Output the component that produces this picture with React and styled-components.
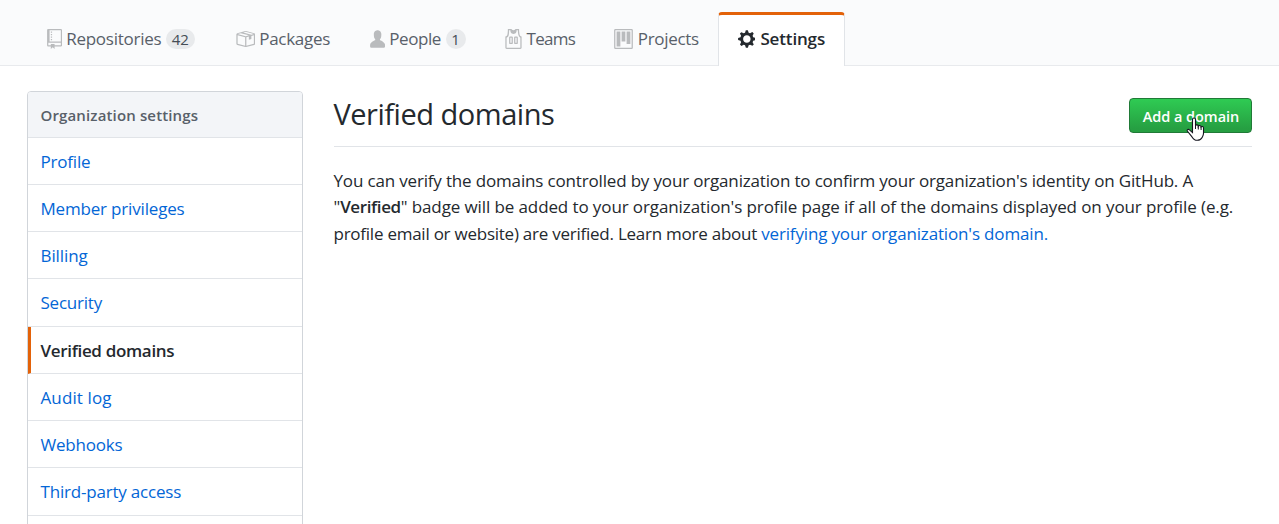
import React from "react";
import styled, { createGlobalStyle } from "styled-components";

const GlobalStyle = createGlobalStyle`
  * { box-sizing: border-box; }
  body {
    margin: 0;
    background: #fff;
    color: #24292e;
    font: 17px/26.5px "Open Sans", "Noto Sans", sans-serif;
    overflow: hidden;
  }
`;

const Page = styled.div`
  height: 524px;
  overflow: hidden;
`;

const TabBar = styled.nav`
  display: flex;
  align-items: flex-end;
  height: 66px;
  padding-left: 28px;
  background: #fafbfc;
  border-bottom: 1px solid #e8eaed;
`;

const Tab = styled.a`
  display: flex;
  align-items: flex-start;
  flex: none;
  width: ${(p) => p.$width}px;
  height: 54px;
  margin-bottom: -1px;
  padding: 11px 0 0 ${(p) => (p.$active ? 18.7 : 18)}px;
  border: 1px solid ${(p) => (p.$active ? "#e1e4e8" : "transparent")};
  border-top: 3px solid ${(p) => (p.$active ? "#e36209" : "transparent")};
  border-bottom: 0;
  border-radius: 4px 4px 0 0;
  background: ${(p) => (p.$active ? "#fff" : "transparent")};
  color: ${(p) => (p.$active ? "#24292e" : "#586069")};
  font-weight: ${(p) => (p.$active ? 600 : 400)};
  white-space: nowrap;
`;

const Label = styled.span`
  letter-spacing: ${(p) => p.$track || 0}px;
  white-space: nowrap;
`;

const TabIcon = styled.svg`
  flex: none;
  height: 20px;
  margin: 3px ${(p) => p.$gap}px 0 0;
  fill: ${(p) => (p.$active ? "#24292e" : "#b9bbbd")};
`;

const Counter = styled.span`
  height: 20px;
  margin: 3px 0 0 4.5px;
  padding: 0 5.8px;
  border-radius: 10px;
  background: #e8eaec;
  color: #444d56;
  font-size: 15px;
  line-height: 20px;
`;

const Content = styled.div`
  display: flex;
  align-items: flex-start;
  gap: 30.5px;
  padding: 25px 27px 0;
`;

const Menu = styled.aside`
  flex: none;
  width: 276px;
  border: 1px solid #d1d5da;
  border-radius: 4px;
  overflow: hidden;
`;

const MenuHeading = styled.h2`
  height: 45.65px;
  margin: 0;
  padding: 0 12.5px;
  border-bottom: 1px solid #e1e4e8;
  background: #f3f5f8;
  color: #586069;
  font-size: 15px;
  font-weight: 600;
  line-height: 47px;
`;

const MenuItem = styled.a`
  display: block;
  height: 47.25px;
  padding-left: ${(p) => (p.$active ? 9.5 : 12.5)}px;
  border-bottom: 1px solid #e1e4e8;
  border-left: ${(p) => (p.$active ? "3px solid #e36209" : "0")};
  color: ${(p) => (p.$active ? "#24292e" : "#0366d6")};
  font-weight: ${(p) => (p.$active ? 600 : 400)};
  line-height: 47.7px;
`;

const Main = styled.main`
  width: 918.5px;
`;

const Subhead = styled.header`
  display: flex;
  align-items: flex-start;
  justify-content: space-between;
  height: 56px;
  border-bottom: 1px solid #e1e4e8;
`;

const Title = styled.h1`
  margin: 0;
  font-size: 29px;
  font-weight: 400;
  line-height: 46px;
`;

const AddButton = styled.button`
  position: relative;
  width: 123px;
  height: 35px;
  margin-top: 7px;
  padding: 2px 0 0 1px;
  border: 1px solid #207a37;
  border-radius: 4px;
  background: linear-gradient(#2fcb53, #269f42 90%);
  color: #fff;
  font: 600 14.5px/31px "Open Sans", "Noto Sans", sans-serif;
  white-space: nowrap;
`;

const Pointer = styled.svg`
  position: absolute;
  left: 56px;
  top: 18px;
`;

const Description = styled.p`
  margin: 20.6px 0 0;
`;

const Line = styled.span`
  display: block;
  letter-spacing: ${(p) => p.$track || 0}px;
  white-space: nowrap;
`;

const Strong = styled.b`
  font-weight: 600;
  letter-spacing: -0.4px;
`;

const Link = styled.a`
  color: #0366d6;
  letter-spacing: -0.16px;
`;

const icons = {
  repo: [12, "M4 9H3V8h1v1zm0-3H3v1h1V6zm0-2H3v1h1V4zm0-2H3v1h1V2zm8-1v12c0 .55-.45 1-1 1H6v2l-1.5-1.5L3 16v-2H1c-.55 0-1-.45-1-1V1c0-.55.45-1 1-1h10c.55 0 1 .45 1 1zm-1 10H1v2h2v-1h3v1h5v-2zm0-10H2v9h9V1z"],
  package: [16, "M1 4.27v7.47c0 .45.3.84.75.97l6.5 1.73c.16.05.34.05.5 0l6.5-1.73c.45-.13.75-.52.75-.97V4.27c0-.45-.3-.84-.75-.97l-6.5-1.74a1.4 1.4 0 0 0-.5 0L1.75 3.3c-.45.13-.75.52-.75.97zm7 9.09l-6-1.59V5l6 1.61v6.75zM2 4l2.5-.67L11 5.06l-2.5.67L2 4zm13 7.77l-6 1.59V6.61l2-.55V8.5l2-.53V5.53L15 5v6.77zm-2-7.24L6.5 2.8l2-.53L15 4l-2 .53z"],
  person: [12, "M12 14.002a.998.998 0 0 1-.998.998H1.001A1 1 0 0 1 0 13.999V13c0-2.633 4-4 4-4s.229-.409 0-1c-.841-.62-.944-1.59-1-4 .173-2.413 1.867-3 3-3s2.827.586 3 3c-.056 2.41-.159 3.38-1 4-.229.59 0 1 0 1s4 1.367 4 4v1.002z"],
  jersey: [14, "M4.5 6l-.5.5v5l.5.5h2l.5-.5v-5L6.5 6h-2zM6 11H5V7h1v4zm6.27-7.25C12.05 2.37 11.96 1.12 12 0H9.02c0 .27-.13.48-.39.69-.25.2-.63.3-1.13.3-.5 0-.88-.09-1.13-.3-.23-.2-.36-.42-.37-.69H3c.05 1.13-.03 2.38-.25 3.75C2.55 5.13 1.95 5.88 1 6v9c.02.27.11.48.31.69.2.21.42.3.69.31h11c.27-.02.48-.11.69-.31.21-.2.3-.42.31-.69V6c-.95-.13-1.53-.88-1.75-2.25h.02zM13 15H2V7c.89-.5 1.48-1.25 1.72-2.25S4.03 2.5 4 1h1c-.02.78.16 1.47.52 2.06.36.58 1.02.89 2 .94.98-.02 1.64-.33 2-.94.36-.59.5-1.28.48-2.06h1c.02 1.42.13 2.55.33 3.38.2.81.69 2 1.67 2.62v8zM8.5 6l-.5.5v5l.5.5h2l.5-.5v-5l-.5-.5h-2zm1.5 5H9V7h1v4z"],
  project: [15, "M10 12h3V2h-3v10zm-4-2h3V2H6v8zm-4 4h3V2H2v12zm-1 1h13V1H1v14zM14 0H1a1 1 0 0 0-1 1v14a1 1 0 0 0 1 1h13a1 1 0 0 0 1-1V1a1 1 0 0 0-1-1z"],
  gear: [14, "M14 8.77v-1.6l-1.94-.64-.45-1.09.88-1.84-1.13-1.13-1.81.91-1.09-.45-.69-1.92h-1.6l-.63 1.94-1.11.45-1.84-.88-1.13 1.13.91 1.81-.45 1.09L0 7.23v1.59l1.94.64.45 1.09-.88 1.84 1.13 1.13 1.81-.91 1.09.45.69 1.92h1.59l.63-1.94 1.11-.45 1.84.88 1.13-1.13-.92-1.81.47-1.09L14 8.75v.02zM7 11c-1.66 0-3-1.34-3-3s1.34-3 3-3 3 1.34 3 3-1.34 3-3 3z"],
};

const tabs = [
  { label: "Repositories", icon: "repo", width: 188, count: 42, track: -0.25, gap: 4 },
  { label: "Packages", icon: "package", width: 135, track: -0.28, gap: 4 },
  { label: "People", icon: "person", width: 134, count: 1, track: -0.4, gap: 4 },
  { label: "Teams", icon: "jersey", width: 110, track: -0.7, gap: 4.8 },
  { label: "Projects", icon: "project", width: 123, track: -0.3, gap: 4.8 },
  { label: "Settings", icon: "gear", width: 127, active: true, track: -0.15, gap: 5 },
];

const menu = [
  { label: "Profile", track: -0.2 },
  { label: "Member privileges", track: -0.18 },
  { label: "Billing", track: -0.1 },
  { label: "Security", track: -0.22 },
  { label: "Verified domains", track: -0.33, active: true },
  { label: "Audit log", track: 0.12 },
  { label: "Webhooks", track: -0.22 },
  { label: "Third-party access", track: -0.2 },
  { label: "", track: 0 },
];

function Icon({ name, active, gap }) {
  const [width, path] = icons[name];
  return (
    <TabIcon $active={active} $gap={gap} width={width * 1.265} viewBox={`0 0 ${width} 16`}>
      <path fillRule="evenodd" d={path} />
    </TabIcon>
  );
}

export default function App() {
  return (
    <Page>
      <GlobalStyle />
      <TabBar>
        {tabs.map((t) => (
          <Tab key={t.label} $width={t.width} $active={t.active}>
            <Icon name={t.icon} active={t.active} gap={t.gap} />
            <Label $track={t.track}>{t.label}</Label>
            {t.count && <Counter>{t.count}</Counter>}
          </Tab>
        ))}
      </TabBar>
      <Content>
        <Menu>
          <MenuHeading>
            <Label $track={0.14}>Organization settings</Label>
          </MenuHeading>
          {menu.map((m) => (
            <MenuItem key={m.label} $active={m.active}>
              <Label $track={m.track}>{m.label}</Label>
            </MenuItem>
          ))}
        </Menu>
        <Main>
          <Subhead>
            <Title>
              <Label $track={-0.48}>Verified domains</Label>
            </Title>
            <AddButton>
              <Label $track={-0.05}>Add a domain</Label>
              <Pointer width="20" height="25" viewBox="0 0 20 25">
                <path
                  d="M6.5 2.5c0-2 3-2 3 0v6c.3-1 2.8-.8 2.8.6.5-.9 2.8-.6 2.8.8.6-.8 2.4-.4 2.4 1v5.3c0 2-.8 3-1.4 4.3-.9 2-2.3 2.8-4.8 2.8-2.9 0-4-1.1-5.3-3.4L1.3 14c-.6-1.3 1-2.2 2.2-1.2l3 2.8z"
                  fill="#fff"
                  stroke="#15151f"
                  strokeWidth="1.1"
                />
                <path d="M9.5 8v4M12.3 9v3.5M15.1 10v3" fill="none" stroke="#15151f" />
              </Pointer>
            </AddButton>
          </Subhead>
          <Description>
            <Line $track={-0.165}>
              You can verify the domains controlled by your organization to confirm your organization's identity on GitHub. A
            </Line>
            <Line $track={-0.105}>
              "<Strong>Verified</Strong>" badge will be added to your organization's profile page if all of the domains displayed on your profile (e.g.
            </Line>
            <Line $track={-0.245}>
              profile email or website) are verified. Learn more about <Link>verifying your organization's domain.</Link>
            </Line>
          </Description>
        </Main>
      </Content>
    </Page>
  );
}
